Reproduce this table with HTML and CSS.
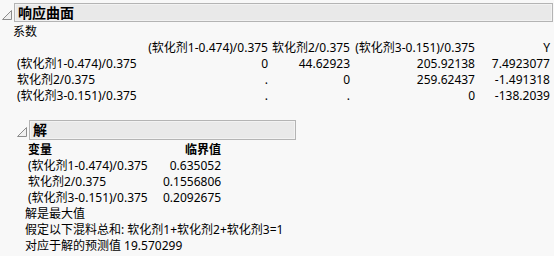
FILE: index.html
```html
<!DOCTYPE html>
<html lang="zh">
<head>
    <meta charset="UTF-8">
    <title>响应曲面</title>
    <link rel="stylesheet" href="styles.css">
</head>
<body>
    <div class="outline">
        <div class="outline-head">
            <svg class="toggle" width="10" height="10" viewBox="0 0 10 10"><polygon points="0.5,9.5 9.5,0.5 9.5,9.5" /></svg>
            <div class="title-box wide">响应曲面</div>
        </div>
        <div class="outline-body">
            <div class="caption">系数</div>
            <div class="coef-table">
                <span></span>
                <span class="num">(软化剂1-0.474)/0.375</span>
                <span class="num">软化剂2/0.375</span>
                <span class="num">(软化剂3-0.151)/0.375</span>
                <span class="num">Y</span>

                <span>(软化剂1-0.474)/0.375</span>
                <span class="num">0</span>
                <span class="num">44.62923</span>
                <span class="num">205.92138</span>
                <span class="num">7.4923077</span>

                <span>软化剂2/0.375</span>
                <span class="num">.</span>
                <span class="num">0</span>
                <span class="num">259.62437</span>
                <span class="num">-1.491318</span>

                <span>(软化剂3-0.151)/0.375</span>
                <span class="num">.</span>
                <span class="num">.</span>
                <span class="num">0</span>
                <span class="num">-138.2039</span>
            </div>

            <div class="outline sub">
                <div class="outline-head">
                    <svg class="toggle" width="10" height="10" viewBox="0 0 10 10"><polygon points="0.5,9.5 9.5,0.5 9.5,9.5" /></svg>
                    <div class="title-box narrow">解</div>
                </div>
                <div class="outline-body">
                    <div class="solve-table">
                        <span class="head">变量</span>
                        <span class="head num">临界值</span>
                        <span>(软化剂1-0.474)/0.375</span>
                        <span class="num">0.635052</span>
                        <span>软化剂2/0.375</span>
                        <span class="num">0.1556806</span>
                        <span>(软化剂3-0.151)/0.375</span>
                        <span class="num">0.2092675</span>
                    </div>
                    <div class="note">解是最大值</div>
                    <div class="note">假定以下混料总和: 软化剂1+软化剂2+软化剂3=1</div>
                    <div class="note">对应于解的预测值 19.570299</div>
                </div>
            </div>
        </div>
    </div>
</body>
</html>
```

FILE: styles.css
```css
body {
    margin: 0;
    background: #f8f8f8;
    color: #000;
    font-family: "Noto Sans", "Noto Sans CJK SC", sans-serif;
    font-size: 12px;
    line-height: 16px;
}
.outline {
    padding-top: 3px;
}
.outline-head {
    display: flex;
    align-items: center;
}
.toggle {
    margin: 4px 2px 0 2px;
}
.toggle polygon {
    fill: #f0f0f0;
    stroke: #8c8c8c;
    stroke-width: 1;
}
.title-box {
    height: 17px;
    line-height: 17px;
    padding-left: 3px;
    background: #e9e9e9;
    border: 1px solid #b4b4b4;
    box-shadow: inset 0 0 0 1px #f2f2f2;
    font-size: 14px;
    font-weight: bold;
}
.wide {
    width: 534px;
}
.narrow {
    width: 262px;
    height: 18px;
}
.outline-body {
    padding-left: 13px;
}
.caption {
    margin-top: 2px;
}
.coef-table {
    display: grid;
    grid-template-columns: 125px 126px 82px 125px 75px;
    padding-left: 4px;
}
.num {
    text-align: right;
}
.sub {
    margin-top: 16px;
    padding-top: 0;
}
.sub .outline-head {
    padding-left: 2px;
}
.sub .outline-body {
    padding-left: 12px;
}
.solve-table {
    display: grid;
    grid-template-columns: 135px 58px;
    padding-left: 3px;
    margin-top: 2px;
}
.head {
    font-weight: bold;
}
```
